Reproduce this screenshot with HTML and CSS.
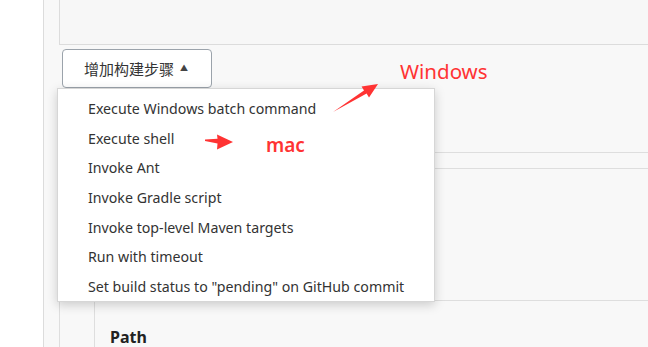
FILE: index.html
```html
<!DOCTYPE html>
<html>
<head>
<meta charset="utf-8">
<link rel="stylesheet" href="styles.css">
</head>
<body>
<div class="page">
  <div class="gutter"></div>
  <div class="content">
    <div class="top-box"></div>
    <div class="btn-row">
      <button class="add-btn"><span>增加构建步骤</span><span class="caret">▲</span></button>
    </div>
    <div class="sec-a"></div>
    <div class="sec-b">
      <div class="inner">
        <div class="path">Path</div>
      </div>
    </div>

    <ul class="menu">
      <li>Execute Windows batch command</li>
      <li>Execute shell</li>
      <li>Invoke Ant</li>
      <li>Invoke Gradle script</li>
      <li>Invoke top-level Maven targets</li>
      <li>Run with timeout</li>
      <li>Set build status to "pending" on GitHub commit</li>
    </ul>
  </div>

  <span class="note note-win">Windows</span>
  <span class="note note-mac">mac</span>
  <svg class="arrows" width="648" height="347" viewBox="0 0 648 347">
    <polygon fill="#ff3333" points="333,112 366.6,93.4 369,97.6 378,84 361.6,86.6 364,90.6"/>
    <polygon fill="#ff3333" points="205,139.5 217.5,138.8 217,134.5 233,142 217,149.5 217.5,143.4 205,141"/>
  </svg>
</div>
</body>
</html>
```

FILE: styles.css
```css
* { box-sizing: border-box; }
html, body { margin: 0; padding: 0; }
body {
  width: 648px;
  height: 347px;
  overflow: hidden;
  background: #fff;
  font-family: "Noto Sans", "Open Sans", sans-serif;
  color: #333;
}
.page {
  position: relative;
  display: flex;
  width: 648px;
  height: 347px;
}
.gutter {
  width: 44px;
  flex: none;
  background: #fff;
  border-right: 1px solid #dcdcdc;
}
.content {
  position: relative;
  flex: 1;
  background: #f8f8f8;
  padding-left: 15px;
  display: flex;
  flex-direction: column;
}
.top-box {
  height: 45px;
  border-left: 1px solid #dcdcdc;
  border-bottom: 1px solid #dcdcdc;
  background: #f7f7f7;
}
.btn-row {
  padding: 4px 0 0 3px;
  height: 108px;
  border-bottom: 1px solid #dedede;
}
.add-btn {
  width: 150px;
  height: 39px;
  background: #fff;
  border: 1.5px solid #9ba3ab;
  border-radius: 4px;
  font-family: "Noto Sans CJK SC", sans-serif;
  font-size: 15px;
  color: #333;
  padding: 0 0 0 21px;
  display: flex;
  align-items: center;
  justify-content: flex-start;
  gap: 6px;
}
.caret {
  font-size: 8px;
  color: #444;
  position: relative;
  top: -1px;
}
.sec-a {
  height: 16px;
  border-bottom: 1px solid #dedede;
}
.sec-b {
  flex: 1;
  border-left: 1px solid #dedede;
  padding: 131px 0 0 34px;
}
.inner {
  height: 100%;
  border-left: 1px solid #dedede;
  border-top: 1px solid #dedede;
  padding: 26px 0 0 15px;
}
.path {
  font-weight: 700;
  font-size: 16px;
  color: #222;
  line-height: 20px;
}
.menu {
  position: absolute;
  left: 13px;
  top: 88px;
  width: 378px;
  height: 214px;
  margin: 0;
  padding: 7px 0 0 0;
  list-style: none;
  background: #fff;
  border: 1px solid #d6d6d6;
  box-shadow: 0 3px 10px rgba(0, 0, 0, 0.18);
}
.menu li {
  height: 29.7px;
  line-height: 29.7px;
  padding-left: 30px;
  font-size: 14.2px;
  color: #333;
  white-space: nowrap;
  margin-top: -2px;
  margin-bottom: 2px;
}
.note {
  position: absolute;
  color: #ff3333;
  font-family: "Noto Sans", sans-serif;
  font-size: 20.5px;
  line-height: 24px;
}
.note-win { left: 400px; top: 59px; }
.note-mac { left: 266px; top: 133px; font-size: 19px; font-weight: 600; }
.arrows {
  position: absolute;
  left: 0;
  top: 0;
  pointer-events: none;
}
```
